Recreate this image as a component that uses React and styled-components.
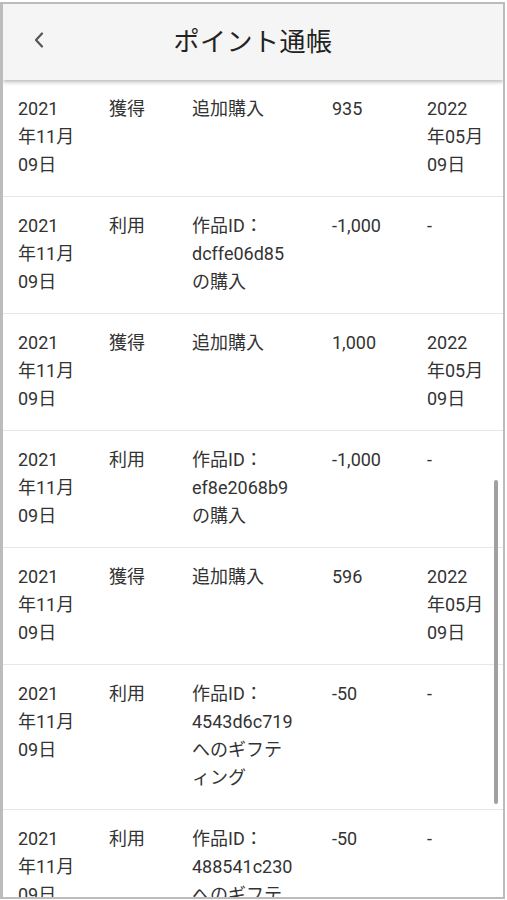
import React from 'react';
import styled, { createGlobalStyle } from 'styled-components';

const GlobalStyle = createGlobalStyle`
  html, body {
    margin: 0;
    padding: 0;
    background: #ffffff;
  }
  body {
    font-family: Roboto, "Noto Sans CJK JP", sans-serif;
    color: #333333;
  }
`;

const Frame = styled.div`
  position: relative;
  box-sizing: border-box;
  width: 505px;
  height: 897px;
  margin: 2px 2px 0 0;
  border: 2px solid #bcbcbc;
  border-left-width: 3px;
  overflow: hidden;
  background: #ffffff;
`;

const Header = styled.header`
  position: relative;
  z-index: 1;
  display: grid;
  grid-template-columns: 1fr auto 1fr;
  align-items: center;
  height: 76px;
  background: #f5f5f5;
  box-shadow: 0 2px 4px rgba(0, 0, 0, 0.28);
`;

const BackButton = styled.button`
  justify-self: start;
  display: flex;
  align-items: center;
  justify-content: center;
  margin: 0 0 5px 28px;
  padding: 0;
  width: 16px;
  height: 24px;
  border: none;
  background: none;
  color: #555555;
`;

const Title = styled.h1`
  margin: 0 0 6px;
  font-size: 26px;
  font-weight: 400;
  color: #222222;
  letter-spacing: 0.5px;
`;

const List = styled.div`
  display: flex;
  flex-direction: column;
`;

const Row = styled.div`
  display: grid;
  grid-template-columns: 57px 49px 106px 61px 57px;
  column-gap: 34px;
  padding: 15px 0 17px 15px;
  border-bottom: 1px solid #e6e6e6;
  font-size: 18px;
  line-height: 28px;
  color: #333333;
`;

const Cell = styled.div`
  line-break: loose;
  word-break: normal;
  overflow-wrap: normal;
`;

const ScrollThumb = styled.div`
  position: absolute;
  top: 476px;
  right: 5px;
  width: 4px;
  height: 324px;
  border-radius: 2px;
  background: #a0a0a0;
`;

const Chevron = () => (
  <svg width="10" height="16" viewBox="0 0 10 16" fill="none">
    <path d="M8 1.5 L2 8 L8 14.5" stroke="currentColor" strokeWidth="2.2" strokeLinecap="round" strokeLinejoin="round" />
  </svg>
);

const rows = [
  { date: '2021年11月09日', type: '獲得', desc: '追加購入', amount: '935', expiry: '2022年05月09日' },
  { date: '2021年11月09日', type: '利用', desc: '作品ID：dcffe06d85の購入', amount: '-1,000', expiry: '-' },
  { date: '2021年11月09日', type: '獲得', desc: '追加購入', amount: '1,000', expiry: '2022年05月09日' },
  { date: '2021年11月09日', type: '利用', desc: '作品ID：ef8e2068b9の購入', amount: '-1,000', expiry: '-' },
  { date: '2021年11月09日', type: '獲得', desc: '追加購入', amount: '596', expiry: '2022年05月09日' },
  { date: '2021年11月09日', type: '利用', desc: '作品ID：4543d6c719へのギフティング', amount: '-50', expiry: '-' },
  { date: '2021年11月09日', type: '利用', desc: '作品ID：488541c230へのギフティング', amount: '-50', expiry: '-' },
];

const App = () => {
  return (
    <>
      <GlobalStyle />
      <Frame>
        <Header>
          <BackButton aria-label="戻る">
            <Chevron />
          </BackButton>
          <Title>ポイント通帳</Title>
          <span />
        </Header>
        <List>
          {rows.map((r, i) => (
            <Row key={i}>
              <Cell>{r.date}</Cell>
              <Cell>{r.type}</Cell>
              <Cell>{r.desc}</Cell>
              <Cell>{r.amount}</Cell>
              <Cell>{r.expiry}</Cell>
            </Row>
          ))}
        </List>
        <ScrollThumb />
      </Frame>
    </>
  );
};

export default App;
